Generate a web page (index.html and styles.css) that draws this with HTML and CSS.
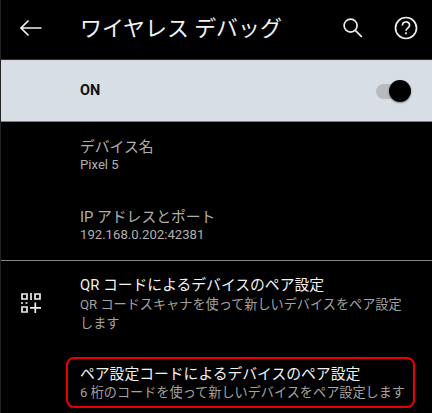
FILE: index.html
```html
<!DOCTYPE html>
<html lang="ja">
<head>
<meta charset="utf-8">
<title>ワイヤレス デバッグ</title>
<link rel="stylesheet" href="styles.css">
</head>
<body>
<main class="screen">
  <header class="bar">
    <svg class="back" width="24" height="18" viewBox="0 0 24 18"><path d="M22.5 9H2M9.5 1.500 2 9l7.500 7.500"/></svg>
    <h1 class="heading">ワイヤレス デバッグ</h1>
    <svg class="search" width="20" height="20" viewBox="0 0 20 20"><circle cx="7.600" cy="7.600" r="6.500"/><path d="m12.300 12.300 6.500 6.500"/></svg>
    <svg class="help" width="24" height="24" viewBox="0 0 24 24"><circle cx="12" cy="12" r="10.500"/><path d="M8.400 9.500c0-4.700 7.200-4.600 7.200-.3 0 2.700-3.600 3-3.600 5.600"/><path d="M12 16.300v2"/></svg>
  </header>
  <section class="switch-row">
    <span class="state">ON</span>
    <span class="toggle"><span class="knob"></span></span>
  </section>
  <section class="info">
    <div class="item muted"><p class="name">デバイス名</p><p class="detail">Pixel 5</p></div>
    <div class="item muted address"><p class="name">IP アドレスとポート</p><p class="detail">192.168.0.202:42381</p></div>
  </section>
  <section class="pairing">
    <div class="qr-row">
      <svg class="qr" width="20" height="20" viewBox="0 0 20 20"><path d="M1 1h5v5H1zM14 1h5v5h-5zM1 14h5v5H1zM10 0v7M14.300 9.500v10.500M9 14.800h11"/><path d="M0 10h2M4.500 10h2"/></svg>
      <div class="item"><p class="name">QR コードによるデバイスのペア設定</p><p class="detail wrapped">QR コードスキャナを使って新しいデバイスをペア設定<br>します</p></div>
    </div>
    <div class="item highlighted"><p class="name">ペア設定コードによるデバイスのペア設定</p><p class="detail">6 桁のコードを使って新しいデバイスをペア設定します</p></div>
  </section>
</main>
</body>
</html>
```
FILE: styles.css
```css
* { box-sizing: border-box; }
body {
  margin: 0;
  background: #000;
  color: #f2f2f2;
  font-family: Roboto, "Noto Sans CJK JP", sans-serif;
}
h1, p { margin: 0; font-weight: 400; white-space: nowrap; }
svg { fill: none; stroke: #eceef2; stroke-width: 1.7; flex: none; }
.screen { height: 413px; overflow: hidden; border-left: 1px solid #222; }
.bar {
  height: 60px;
  display: flex;
  align-items: center;
  padding: 0 14px 3px 18px;
  border-bottom: 1px solid #333;
}
.heading {
  font-size: 21.9px;
  line-height: 30px;
  margin-left: 37px;
  padding-top: 1px;
  flex: 1;
}
.help { margin-left: 31px; }
.switch-row {
  height: 62px;
  display: flex;
  align-items: center;
  justify-content: space-between;
  padding: 0 21px 0 79px;
  background: #d8dee6;
  border-top: 1px solid #d5d3dc;
  border-bottom: 1px solid #7b7f85;
}
.state { color: #111; font-size: 14.500px; font-weight: 700; line-height: 20px; }
.toggle {
  width: 35px;
  height: 15px;
  display: flex;
  align-items: center;
  justify-content: flex-end;
  background: #b9babd;
  border-radius: 8px;
}
.knob {
  width: 22px;
  height: 22px;
  border-radius: 50%;
  background: #000;
  box-shadow: 0 1px 2px #0006;
  flex: none;
}
.info { height: 139px; padding: 16px 0 0 79px; border-bottom: 1px solid #858585; }
.name { font-size: 14.800px; line-height: 19px; }
.detail { color: #a3a3a3; font-size: 13.150px; line-height: 18px; }
.muted { color: #b0b0b0; }
.muted .detail { color: #b0b0b0; line-height: 16px; }
.address { margin-top: 35px; }
.pairing { padding-top: 15px; }
.qr-row { display: flex; padding-left: 20px; }
.qr { margin: 17px 39px 0 0; }
.wrapped { line-height: 19px; }
.highlighted {
  width: 349px;
  height: 51px;
  margin: 24px 0 0 65px;
  padding: 6px 0 0 12px;
  border: 2px solid #e80000;
  border-radius: 8px;
}
```
